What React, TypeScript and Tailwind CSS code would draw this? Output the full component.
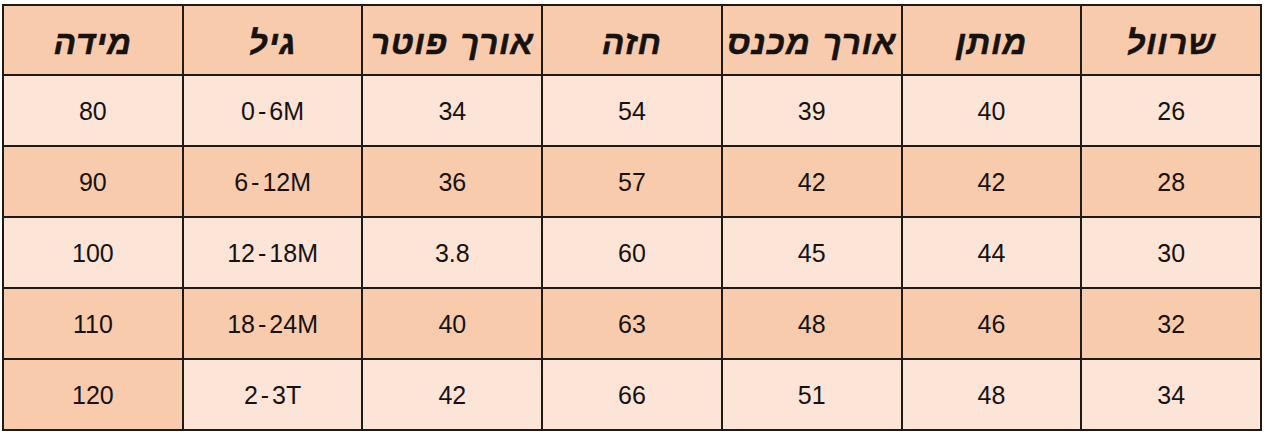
const headers = ["שרוול", "מותן", "אורך מכנס", "חזה", "אורך פוטר", "גיל", "מידה"];

const rows: string[][] = [
  ["26", "40", "39", "54", "34", "0-6M", "80"],
  ["28", "42", "42", "57", "36", "6-12M", "90"],
  ["30", "44", "45", "60", "3.8", "12-18M", "100"],
  ["32", "46", "48", "63", "40", "18-24M", "110"],
  ["34", "48", "51", "66", "42", "2-3T", "120"],
];

function Value({ text }: { text: string }) {
  const parts = text.split("-");
  if (parts.length === 1) return <>{text}</>;
  return (
    <span dir="ltr">
      {parts[0]}
      <span className="px-[3px]">-</span>
      {parts[1]}
    </span>
  );
}

export default function App() {
  return (
    <div className="h-[436px] w-[1265px] bg-white pl-[2px] pt-[4px]">
      <div
        dir="rtl"
        className="grid w-[1260px] grid-cols-7 gap-[2px] bg-[#1e1a18] p-[2px] font-['Liberation_Sans',Arial,sans-serif] text-[#161212]"
      >
        {headers.map((h) => (
          <div
            key={h}
            className="flex h-[68px] items-center justify-center bg-[#f8cbad] pt-[6px] text-[33px] font-bold italic tracking-[1px] [word-spacing:2px] [-webkit-text-stroke:0.6px_#161212]"
          >
            {h}
          </div>
        ))}
        {rows.map((row, r) =>
          row.map((cell, c) => {
            const dark = r % 2 === 1 || (r === 4 && c === 6);
            return (
              <div
                key={`${r}-${c}`}
                className={`flex h-[69px] items-center justify-center pt-[3px] text-[25px] ${
                  dark ? "bg-[#f8cbad]" : "bg-[#fce4d6]"
                }`}
              >
                <Value text={cell} />
              </div>
            );
          })
        )}
      </div>
    </div>
  );
}
